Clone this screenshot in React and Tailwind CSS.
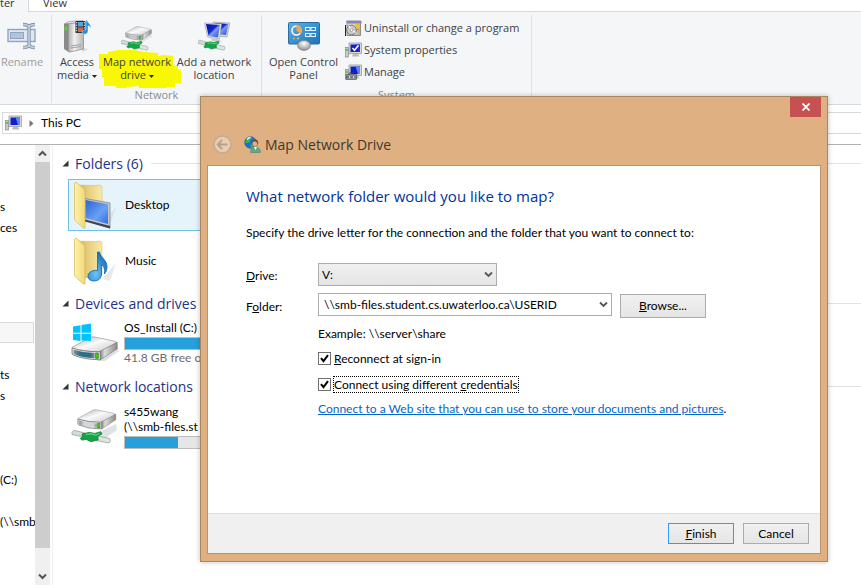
import React from "react";

const uiFont = "font-['Lato','Open_Sans',sans-serif]";
const headFont = "font-['Open_Sans','Noto_Sans',sans-serif]";

/* ---------- icons ---------- */

function RenameIcon() {
  return (
    <svg width="30" height="28" viewBox="0 0 30 28" fill="none">
      <rect x="1" y="7.500" width="27" height="12" fill="#dfe7f1" stroke="#8fa5c4" strokeWidth="1.400" />
      <rect x="3.500" y="10.500" width="13" height="6" fill="#b3c3d8" stroke="#8fa5c4" />
      <path d="M16 2.500c3 0 5 .6 6 2.400 1-1.800 3-2.400 6-2.400M16 25.500c3 0 5-.600 6-2.400 1 1.800 3 2.400 6 2.400M22 4.500v19" stroke="#8496ad" strokeWidth="3.400" />
      <path d="M16 2.500c3 0 5 .600 6 2.400 1-1.800 3-2.400 6-2.400M16 25.500c3 0 5-.600 6-2.400 1 1.800 3 2.400 6 2.400M22 4.500v19" stroke="#c3cfde" strokeWidth="1.600" />
    </svg>
  );
}

function MediaIcon() {
  return (
    <svg width="30" height="34" viewBox="0 0 30 34">
      <defs>
        <linearGradient id="mdF" x1="0" x2="1"><stop offset="0" stopColor="#b0b0b0" /><stop offset=".4" stopColor="#f0f0f0" /><stop offset="1" stopColor="#b4b4b4" /></linearGradient>
      </defs>
      <path d="M20 29l6 1-5 3z" fill="#d5d7da" />
      <path d="M2 5l5-2.500 14-1-.5 2L7 5z" fill="#e6e6e6" stroke="#8a8a8a" strokeWidth=".6" />
      <path d="M2 5l4.500-.7V33L2 30z" fill="#8a8a8a" />
      <path d="M6.500 4.800L21.500 3v27L8 33H6.500z" fill="url(#mdF)" stroke="#888" strokeWidth=".7" />
      <path d="M2.500 8l2.500-.6v4L2.500 11z" fill="#4be01d" />
      <path d="M9 27l10-1.500M9 29l10-1.500" stroke="#888" strokeWidth=".7" />
      <rect x="13.500" y="2" width="10" height="12" fill="#26323f" />
      <rect x="16" y="3" width="5" height="4.500" fill="#5da3d8" />
      <rect x="16" y="8.500" width="5" height="4.500" fill="#d0684a" />
      <path d="M14.700 3v10.500M22.300 3v10.500" stroke="#fff" strokeDasharray="1.300 1.300" strokeWidth="1" />
      <path d="M25 1c.500 3 4.500 4 3.800 8.500-.500-1.700-1.500-2.500-2.800-2.800V12c0 1.800-1.300 3-3 3.200-1.700.2-2.800-.6-2.800-1.900 0-1.700 1.800-2.800 3.800-2.400V1z" fill="#1d8fdc" stroke="#fff" strokeWidth=".4" />
    </svg>
  );
}

function Plug() {
  return (
    <g>
      <path d="M0 3l1.500-1.800 9 2.500-1.500 3.500L0 5z" fill="#d3ddd8" stroke="#8d9a94" strokeWidth=".6" />
      <path d="M21 6.500l9 2 .8 2.200-1.200 2-9.500-2z" fill="#dbe6e3" stroke="#8d9a94" strokeWidth=".6" />
      <path d="M8 4.500l6-1.500 4 1 5-1.500 1 2-3.500 2.300.5 3.200-6 1.500-3.500-2-3.500.6-1.500-1.500 2-1.600z" fill="#14a447" stroke="#087a2e" strokeWidth=".6" />
      <path d="M11 5l4-.8 4 1.400 3-1.500" stroke="#5de084" strokeWidth="1" fill="none" />
    </g>
  );
}

function DriveBody({ tone, id }) {
  return (
    <g>
      <defs>
        <linearGradient id={id + "t"} x1="0" y1="0" x2="1" y2="1"><stop offset="0" stopColor="#a8a8a8" /><stop offset=".45" stopColor="#fafafa" /><stop offset="1" stopColor="#c4c4c4" /></linearGradient>
        <linearGradient id={id + "f"} x1="0" x2="1"><stop offset="0" stopColor="#8e9294" /><stop offset=".3" stopColor={tone} /><stop offset=".8" stopColor={tone} /><stop offset="1" stopColor="#909090" /></linearGradient>
        <linearGradient id={id + "s"} x1="0" x2="1"><stop offset="0" stopColor="#777" /><stop offset=".3" stopColor="#dcdcdc" /><stop offset="1" stopColor="#8a8a8a" /></linearGradient>
      </defs>
      <path d="M1 12L18 1.500Q20 .5 22 1l20 4.500q2 .6 1 2L27 17.500 2 14z" fill={"url(#" + id + "t)"} stroke="#9a9a9a" strokeWidth=".7" />
      <path d="M27 16.500L44 6.500v7L28 25z" fill={"url(#" + id + "s)"} stroke="#777" strokeWidth=".6" />
      <path d="M1 12.500q12 4.500 27 4v8.500Q13 25 2 20q-1-.5-1-2z" fill="#dedede" stroke="#6f6f6f" strokeWidth=".8" />
      <path d="M2.500 14.500q10 3.500 20 3.500v5.500Q11 23 2.500 19z" fill={"url(#" + id + "f)"} />
      <path d="M23.500 18h2.500v5.500h-2.500z" fill="#3be00b" stroke="#145a06" strokeWidth=".6" />
    </g>
  );
}

function NetDriveSmall() {
  return (
    <svg width="32" height="30" viewBox="0 0 32 30">
      <path d="M16 16l14-5 1 5-12 6z" fill="#e2e4e6" />
      <g transform="translate(4 5) scale(.6 .56)"><DriveBody id="nds" tone="#c4c7ca" /></g>
      <g transform="translate(0 18) scale(.88)"><Plug /></g>
    </svg>
  );
}

function NetLocationIcon() {
  return (
    <svg width="32" height="30" viewBox="0 0 32 30">
      <defs><linearGradient id="nl" x1="0" y1="0" x2="1" y2="1"><stop offset="0" stopColor="#0410a5" /><stop offset=".45" stopColor="#1327cf" /><stop offset=".55" stopColor="#7d9df0" /><stop offset="1" stopColor="#1b48dc" /></linearGradient></defs>
      <path d="M15 1l17 1-3 14-12-1z" fill="#d7d7d0" stroke="#999" strokeWidth=".6" />
      <path d="M17 2l13.500 1-2.500 11-10-1z" fill="url(#nl)" />
      <path d="M6.500 2l17 1-2 15-12-2z" fill="#e6e6de" stroke="#999" strokeWidth=".6" />
      <path d="M8 3l14 1-2 12.500-9.500-1.600z" fill="url(#nl)" />
      <path d="M13 17l7 1 4 3-10-1z" fill="#c9c9c3" />
      <g transform="translate(0 18) scale(.88)"><Plug /></g>
    </svg>
  );
}

function ControlPanelIcon() {
  return (
    <svg width="32" height="29" viewBox="0 0 32 29">
      <defs>
        <linearGradient id="cp" x1="0" y1="0" x2="1" y2="1"><stop offset="0" stopColor="#5eb1e4" /><stop offset="1" stopColor="#1a73b8" /></linearGradient>
        <radialGradient id="cb" cx=".5" cy=".3" r=".7"><stop offset="0" stopColor="#fff" /><stop offset="1" stopColor="#8b8b8b" /></radialGradient>
      </defs>
      <rect x=".5" y=".5" width="31" height="21.500" rx="1" fill="url(#cp)" stroke="#2b6da0" />
      <circle cx="8.500" cy="8.500" r="4.500" fill="none" stroke="#fff" strokeWidth="1.500" />
      <path d="M8.500 8.500V3a5.500 5.500 0 0 1 4 9z" fill="#f9a63a" />
      <g fill="#2c8fd0" stroke="#fff" strokeWidth=".9"><rect x="17.500" y="5.500" width="4.500" height="3" /><rect x="23" y="5.500" width="4.500" height="3" /><rect x="17.500" y="11.500" width="4.500" height="3" /><rect x="23" y="11.500" width="4.500" height="3" /></g>
      <circle cx="6" cy="16.500" r="1" fill="#f9a63a" /><circle cx="10" cy="16.500" r="1" fill="#f2c28a" />
      <ellipse cx="16" cy="23.500" rx="6.500" ry="5" fill="url(#cb)" stroke="#808080" strokeWidth=".6" />
    </svg>
  );
}

function UninstallIcon() {
  return (
    <svg width="17" height="17" viewBox="0 0 17 17">
      <rect x="2" y="1" width="13.500" height="14.500" fill="#d9d6c6" stroke="#777" strokeWidth=".8" />
      <path d="M1 1h15.500v2.500H2.500z" fill="#8583c4" />
      <path d="M10 4h5v5h-3z" fill="#f0bd38" />
      <rect x="8" y="9.500" width="6" height="6" fill="#c7c5b6" stroke="#777" strokeWidth=".6" />
      <circle cx="6.500" cy="10" r="4.800" fill="#c9cbc9" stroke="#6f6f6f" strokeWidth=".9" />
      <path d="M6.500 10L4 6M6.500 10l4 2.500" stroke="#fff" strokeWidth="1.200" />
      <circle cx="6.500" cy="10" r="1.500" fill="#fff" stroke="#777" strokeWidth=".6" />
      <path d="M.5 5v11" stroke="#222" />
    </svg>
  );
}

function PcIcon({ kind }) {
  return (
    <svg width="17" height="16" viewBox="0 0 17 16">
      <rect x=".5" y="5.500" width="3" height="9.500" fill="#c9cdc9" stroke="#7b7b7b" strokeWidth=".6" />
      <rect x="1.200" y="7" width="1.600" height="2" fill="#39c927" />
      <path d="M4 1h12.500v10.500H4z" fill="#dedcd2" stroke="#9a9a9a" strokeWidth=".8" />
      <path d="M5.500 2.500H15v7.500H5.500z" fill="#0f1fc9" />
      <path d="M10.500 2.500H15v7.500h-2z" fill={kind === "props" ? "#1b2fd6" : "#5d86ee"} />
      <path d="M8 12h5l1.500 2.500H7z" fill="#bdbbb2" />
      {kind === "props" && <path d="M7.500 6l2 2.300 4-5" stroke="#fff" strokeWidth="1.500" fill="none" />}
      {kind === "manage" && (
        <g>
          <rect x="1" y="10.500" width="10.500" height="5" fill="#8f959c" stroke="#5b5f65" strokeWidth=".7" />
          <path d="M4 10.500V9h4.500v1.500M1 13h10.500" stroke="#3f4348" strokeWidth=".8" fill="none" />
          <rect x="4" y="12.300" width="1.200" height="1.500" fill="#fff" /><rect x="8" y="12.300" width="1.200" height="1.500" fill="#fff" />
        </g>
      )}
    </svg>
  );
}

function FolderIcon({ kind }) {
  const g = "fo" + kind;
  return (
    <svg width="46" height="48" viewBox="0 0 46 48">
      <defs>
        <linearGradient id={g} x1="0" x2="1"><stop offset="0" stopColor="#fff3a8" /><stop offset="1" stopColor="#f0d87c" /></linearGradient>
        <linearGradient id={g + "b"} x1="0" x2="1"><stop offset="0" stopColor="#d2b15a" /><stop offset=".6" stopColor="#ecd585" /><stop offset="1" stopColor="#f8eaa8" /></linearGradient>
        <linearGradient id={g + "s"} x1="0" y1="0" x2="1" y2="1"><stop offset="0" stopColor="#2c63cf" /><stop offset=".6" stopColor="#6aa0f4" /><stop offset="1" stopColor="#2f6ce0" /></linearGradient>
        <radialGradient id={g + "n"} cx=".4" cy=".75" r=".7"><stop offset="0" stopColor="#6cc4f6" /><stop offset="1" stopColor="#1673c4" /></radialGradient>
      </defs>
      <path d="M30 42l14-16-6 18z" fill="#cfd6da" opacity=".5" />
      <path d="M4 4l20 .5 4-.5 2 1.500V38l-17 3z" fill={"url(#" + g + "b)"} stroke="#d8bf6c" strokeWidth=".6" />
      {kind === "desktop" ? (
        <g>
          <path d="M13 17.500l25 4.500v25l-25-8z" fill="#c4c8cb" stroke="#777d82" strokeWidth=".7" />
          <path d="M13.500 19l22.500 4.200V43l-22.500-6z" fill={"url(#" + g + "s)"} />
          <path d="M13 38.500L38 45v2.500l-25-7z" fill="#3f444a" />
        </g>
      ) : null}
      <path d="M2.500 2.500q0-1.500 2-1L11 7q2 1.500 2 4v35q0 2-1.500 1L3.500 40q-1-1-1-3z" fill={"url(#" + g + ")"} stroke="#d5b65c" strokeWidth=".7" />
      {kind === "music" ? (
        <path d="M27.500 15c1 6 7.500 7.500 7.500 15 0 3-1 5-2.500 7 .5-5-.5-8-3-9.500V37c0 4.500-3.500 7-7.500 7s-6-2-6-5c0-3.500 4.500-6.500 9.500-5.500V15z" fill={"url(#" + g + "n)"} stroke="#0f66ac" strokeWidth=".8" />
      ) : null}
    </svg>
  );
}

function OsDriveIcon() {
  return (
    <svg width="50" height="40" viewBox="0 0 50 40">
      <path d="M26 38l20-16 2 6-14 10z" fill="#dddfe1" />
      <g transform="translate(0 13) scale(1.050 .95)"><DriveBody id="osd" tone="#2c6f86" /></g>
      <path d="M2 3.500l7.500-1.200v7.500H2zM10.500 2.100L20 .5v9.300h-9.500zM2 10.800h7.500V18L2 17zM10.500 10.800H20V18l-9.500-.6z" fill="#00c3fb" />
    </svg>
  );
}

function NetDriveIcon() {
  return (
    <svg width="50" height="38" viewBox="0 0 50 38">
      <path d="M28 24l17-8 1 6-14 10z" fill="#e0e2e4" />
      <g transform="translate(6 1) scale(.88 .8)"><DriveBody id="ndl" tone="#d4d7da" /></g>
      <g transform="translate(1 21) scale(1.250 1.100)"><Plug /></g>
    </svg>
  );
}

function GlobeUserIcon() {
  return (
    <svg width="17" height="17" viewBox="0 0 17 17">
      <circle cx="6.500" cy="6.500" r="5.800" fill="#1a6fd0" stroke="#0d3f8a" strokeWidth=".5" />
      <path d="M2 4c2-2.500 4-3 6-3 0 2-2 2-2 4S3 7 1 7zM7 8c2 0 3 1 3 2.500S8 12 6.500 12z" fill="#3fb24a" />
      <path d="M3 3.500q1.500-2 3.500-2" stroke="#d8f0ff" strokeWidth="1.500" fill="none" />
      <path d="M6.500 16.500c0-4 2-5.500 4.500-5.500s5.500 1.500 5.500 5.500z" fill="#5fa98a" stroke="#3a7c60" strokeWidth=".5" />
      <ellipse cx="11" cy="7.500" rx="2.600" ry="3.500" fill="#e3b189" stroke="#5a3a22" strokeWidth=".4" />
      <path d="M7.800 6.500C7.500 2.500 14.500 2 14.300 7l-1 1.500c0-2-.8-3-2.300-3s-2.500 0-3.200 1z" fill="#7a4a28" />
      <path d="M10 11l1.500 3 1.500-3z" fill="#fff" />
    </svg>
  );
}

function Chevron({ up, thin }) {
  return (
    <svg width="9" height="7" viewBox="0 0 9 7" fill="none" className={up ? "rotate-180" : ""}>
      <path d="M1 1.500l3.500 3.500L8 1.500" stroke="#555" strokeWidth={thin ? 1.8 : 2} />
    </svg>
  );
}

function Caret() {
  return (
    <svg width="5" height="3" viewBox="0 0 5 3" className="ml-[3px] inline-block align-middle"><path d="M0 0h5L2.500 3z" fill="#222" /></svg>
  );
}

/* ---------- ribbon ---------- */

function BigButton({ icon, lines, width, caret, muted, marked }) {
  return (
    <button className={"relative flex shrink-0 flex-col items-center whitespace-nowrap pt-[2px] " + width + (muted ? " text-[#9b9da0]" : " text-[#404246]")}>
      {marked && (
        <svg className="absolute -left-[3px] top-[33px]" width="82" height="40" viewBox="0 0 82 40">
          <path d="M0 6h9V4l10-2h16l10 2 14 1v3l6-1 9 1v10h5v3l3 1v13h-6v4h-8v2H40v-3l-12 1v3h-3v3h-8v-7H5v-9H3v-8H0z" fill="#f8f800" />
        </svg>
      )}
      <span className="relative flex h-[38px] items-center justify-center">{icon}</span>
      <span className="relative leading-[13px]">
        {lines.map((l, i) => (
          <span key={l} className="block">{l}{caret && i === lines.length - 1 && <Caret />}</span>
        ))}
      </span>
    </button>
  );
}

function Group({ label, width, children }) {
  return (
    <section className={"flex shrink-0 flex-col border-r border-[#dfe1e4] " + width}>
      <div className="flex flex-1">{children}</div>
      <p className="h-4 text-center leading-4 text-[#8b8d90]">{label}</p>
    </section>
  );
}

function SmallAction({ icon, text }) {
  return (
    <button className="flex h-[22px] items-center gap-[2px] whitespace-nowrap text-[#404246]">{icon}{text}</button>
  );
}

function Ribbon() {
  return (
    <header className={"text-[11px] " + headFont}>
      <nav className="flex h-3 bg-white leading-[5px] text-[#333]">
        <button className="flex w-[29px] items-start border-r border-[#d5d7d9] bg-[#f5f6f7]">ter</button>
        <button className="flex flex-1 items-start border-b border-[#d5d7d9] pl-[14px]">View</button>
      </nav>
      <div className="flex h-[93px] border-b border-[#d5d7d9] bg-[#f5f6f7] pb-[1px] pt-[3px]">
        <Group width="w-[52px]">
          <BigButton icon={<RenameIcon />} lines={["Rename"]} width="w-[44px]" muted />
        </Group>
        <Group label="Network" width="w-[210px]">
          <BigButton icon={<MediaIcon />} lines={["Access", "media"]} width="w-[50px]" caret />
          <BigButton icon={<NetDriveSmall />} lines={["Map network", "drive"]} width="w-[70px]" caret marked />
          <BigButton icon={<NetLocationIcon />} lines={["Add a network", "location"]} width="w-[84px]" />
        </Group>
        <Group label="System" width="w-[270px]">
          <BigButton icon={<ControlPanelIcon />} lines={["Open Control", "Panel"]} width="w-[83px]" />
          <div className="flex flex-col pt-[2px]">
            <SmallAction icon={<UninstallIcon />} text="Uninstall or change a program" />
            <SmallAction icon={<PcIcon kind="props" />} text="System properties" />
            <SmallAction icon={<PcIcon kind="manage" />} text="Manage" />
          </div>
        </Group>
      </div>
    </header>
  );
}

/* ---------- explorer ---------- */

const navRows = ["s", "ces", "", "", "", "", "*", "", "ts", "s", "", "", "", "(C:)", "", "(\\\\smb"];

function NavPane() {
  return (
    <nav className="w-[35px] shrink-0 overflow-hidden pt-[51px]">
      {navRows.map((t, i) =>
        t === "*" ? (
          <div key={i} className="h-[21px] w-[34px] border border-l-0 border-[#dadada] bg-[#f7f7f7]" />
        ) : (
          <div key={i} className="h-[21px] whitespace-nowrap leading-[21px]">{t}</div>
        )
      )}
    </nav>
  );
}

function ScrollBar() {
  return (
    <div className="flex w-[15px] shrink-0 flex-col bg-[#f0f0f0]">
      <button aria-label="Scroll up" className="flex h-[17px] items-center justify-center"><Chevron up /></button>
      <div className="flex-1 bg-[#cdcdcd]" />
      <div className="h-5" />
      <button aria-label="Scroll down" className="flex h-[17px] items-center justify-center"><Chevron /></button>
    </div>
  );
}

function Section({ title, children }) {
  return (
    <section>
      <h2 className={"flex h-6 items-center whitespace-nowrap text-[14px] text-[#1e3287] " + headFont}>
        <svg width="7" height="7" viewBox="0 0 7 7" className="mr-[6px]"><path d="M6.500.5v6h-6z" fill="#333" /></svg>
        {title}
        <span className="ml-2 h-px flex-1 bg-[#e2e2e2]" />
      </h2>
      {children}
    </section>
  );
}

function Item({ icon, selected, children }) {
  return (
    <div className={"ml-[6px] flex h-[52px] w-[250px] items-center border " + (selected ? "border-[#70c0e7] bg-[#e5f3fb]" : "border-transparent")}>
      <span className="flex w-[56px] shrink-0 items-center pl-[3px]">{icon}</span>
      {children}
    </div>
  );
}

function Usage({ percent }) {
  return (
    <div className="h-[13px] w-[168px] border border-[#bcbcbc] bg-[#e6e6e6]">
      <div className="h-full bg-[#26a0da]" style={{ width: percent + "%" }} />
    </div>
  );
}

function Content() {
  return (
    <main className="min-w-0 flex-1 pl-[9px] pt-[6px]">
      <Section title="Folders (6)">
        <div className="mb-1 mt-1 flex flex-col gap-1">
          <Item icon={<FolderIcon kind="desktop" />} selected>Desktop</Item>
          <Item icon={<FolderIcon kind="music" />}>Music</Item>
        </div>
      </Section>
      <Section title="Devices and drives">
        <div className="mb-2 mt-[5px] flex items-center pl-[9px]">
          <span className="w-[53px] shrink-0"><OsDriveIcon /></span>
          <div className="leading-4">
            <p className="mb-px">OS_Install (C:)</p>
            <Usage percent={91} />
            <p className="text-[#6d6d6d]">41.8 GB free of</p>
          </div>
        </div>
      </Section>
      <Section title="Network locations">
        <div className="mt-[6px] flex items-center pl-[9px]">
          <span className="w-[53px] shrink-0"><NetDriveIcon /></span>
          <div className="leading-[15px]">
            <p>s455wang</p>
            <p className="mb-[2px]">(\\smb-files.st</p>
            <Usage percent={32} />
          </div>
        </div>
      </Section>
    </main>
  );
}

/* ---------- dialog ---------- */

const plainButton = "h-[21px] w-[66px] border bg-linear-to-b from-[#f0f0f0] to-[#e5e5e5] leading-[19px]";

function CheckRow({ id, focused, children }) {
  return (
    <div className="flex h-[26px] items-center">
      <span className="grid">
        <input id={id} type="checkbox" defaultChecked className="peer col-start-1 row-start-1 h-[13px] w-[13px] appearance-none border border-[#707070] bg-white" />
        <svg width="13" height="13" viewBox="0 0 13 13" className="pointer-events-none invisible col-start-1 row-start-1 peer-checked:visible"><path d="M3 6.200l2.500 3 4.500-6" stroke="#000" strokeWidth="2" fill="none" /></svg>
      </span>
      <label htmlFor={id} className={"ml-[2px] h-[17px] border border-dotted leading-[15px] " + (focused ? "border-black" : "border-transparent")}>{children}</label>
    </div>
  );
}

function Dialog() {
  return (
    <div role="dialog" aria-labelledby="dlg-title" className="absolute left-[200px] top-[96px] flex w-[628px] flex-col border border-[#a9865f] bg-[#dfb182] px-[6px] pb-[7px] shadow-[0_0_5px_rgba(0,0,0,0.25)]">
      <div className="flex h-5 justify-end">
        <button aria-label="Close" className="flex w-[31px] items-center justify-center bg-[#c75050]">
          <svg width="8" height="8" viewBox="0 0 8 8"><path d="M.5.500l7 7M7.500.500l-7 7" stroke="#fff" strokeWidth="1.800" /></svg>
        </button>
      </div>
      <div className="flex h-12 items-center pl-[6px] pt-[7px]">
        <button aria-label="Back">
          <svg width="19" height="19" viewBox="0 0 19 19" fill="none"><circle cx="9.500" cy="9.500" r="8.500" fill="#e8cdb0" stroke="#c0aa92" strokeWidth="1.400" /><path d="M14.500 9.500H5M9 5L4.800 9.500 9 14" stroke="#b5a18c" strokeWidth="1.900" /></svg>
        </button>
        <span className="ml-3"><GlobeUserIcon /></span>
        <h1 id="dlg-title" className={"ml-1 text-[14px] text-[#43372b] " + headFont}>Map Network Drive</h1>
      </div>
      <div className="border border-[#b8926a] bg-white">
        <form className="h-[347px] pl-[38px] pt-[17px]" onSubmit={(e) => e.preventDefault()}>
          <h2 className={"h-[26px] text-[15px] leading-[26px] text-[#003399] " + headFont}>What network folder would you like to map?</h2>
          <p className="mt-[15px] h-[18px] leading-[18px]">Specify the drive letter for the connection and the folder that you want to connect to:</p>
          <div className="mt-[21px] grid grid-cols-[72px_294px_86px] gap-y-[7px]">
            <label htmlFor="drive" className="self-center pt-[2px]"><u>D</u>rive:</label>
            <div className="grid w-[179px] items-center">
              <select id="drive" className="col-start-1 row-start-1 h-[23px] appearance-none border border-[#acacac] bg-linear-to-b from-[#f0f0f0] to-[#e5e5e5] pl-[3px]"><option>V:</option></select>
              <span className="pointer-events-none col-start-1 row-start-1 justify-self-end pr-1"><Chevron thin /></span>
            </div>
            <span />
            <label htmlFor="folder" className="self-center pt-[2px]">F<u>o</u>lder:</label>
            <div className="flex h-[23px] items-center border border-[#acacac] bg-white">
              <input id="folder" defaultValue={"\\\\smb-files.student.cs.uwaterloo.ca\\USERID"} className="min-w-0 flex-1 pl-[5px] outline-none" />
              <button type="button" aria-label="Show recent folders" className="px-[3px]"><Chevron thin /></button>
            </div>
            <button type="button" className="ml-2 mt-px h-6 w-[86px] border border-[#acacac] bg-linear-to-b from-[#f0f0f0] to-[#e5e5e5]"><u>B</u>rowse...</button>
          </div>
          <div className="pl-[72px]">
            <p className="mt-[7px] h-[18px] leading-[18px]">Example: \\server\share</p>
            <div className="mt-[2px]">
              <CheckRow id="reconnect"><u>R</u>econnect at sign-in</CheckRow>
              <CheckRow id="creds" focused>Connect using different <u>c</u>redentials</CheckRow>
            </div>
            <p className="mt-[3px]"><a href="#web" className="text-[#0066cc] underline">Connect to a Web site that you can use to store your documents and pictures</a>.</p>
          </div>
        </form>
        <footer className="flex h-10 items-center justify-end gap-[9px] border-t border-[#dfdfdf] bg-[#f0f0f0] pr-[11px]">
          <button className={plainButton + " border-[#3399ff]"}><u>F</u>inish</button>
          <button className={plainButton + " border-[#acacac]"}>Cancel</button>
        </footer>
      </div>
    </div>
  );
}

export default function App() {
  return (
    <div className={"relative flex min-h-screen flex-col overflow-hidden bg-white pb-[3px] text-[12px] text-black " + uiFont}>
      <Ribbon />
      <div className="flex h-10 flex-col border-b border-[#b0b2b4] pt-[7px]">
        <div className="ml-[2px] flex h-[22px] items-center border border-r-0 border-[#d9d9d9] pl-[2px]">
          <PcIcon />
          <svg width="5" height="7" viewBox="0 0 5 7" className="mx-[7px]"><path d="M.500 0L4.500 3.500.500 7z" fill="#777" /></svg>
          This PC
        </div>
      </div>
      <div className="flex flex-1">
        <NavPane />
        <ScrollBar />
        <div className="w-[3px] shrink-0 border-r border-[#efefef]" />
        <Content />
      </div>
      <Dialog />
    </div>
  );
}
